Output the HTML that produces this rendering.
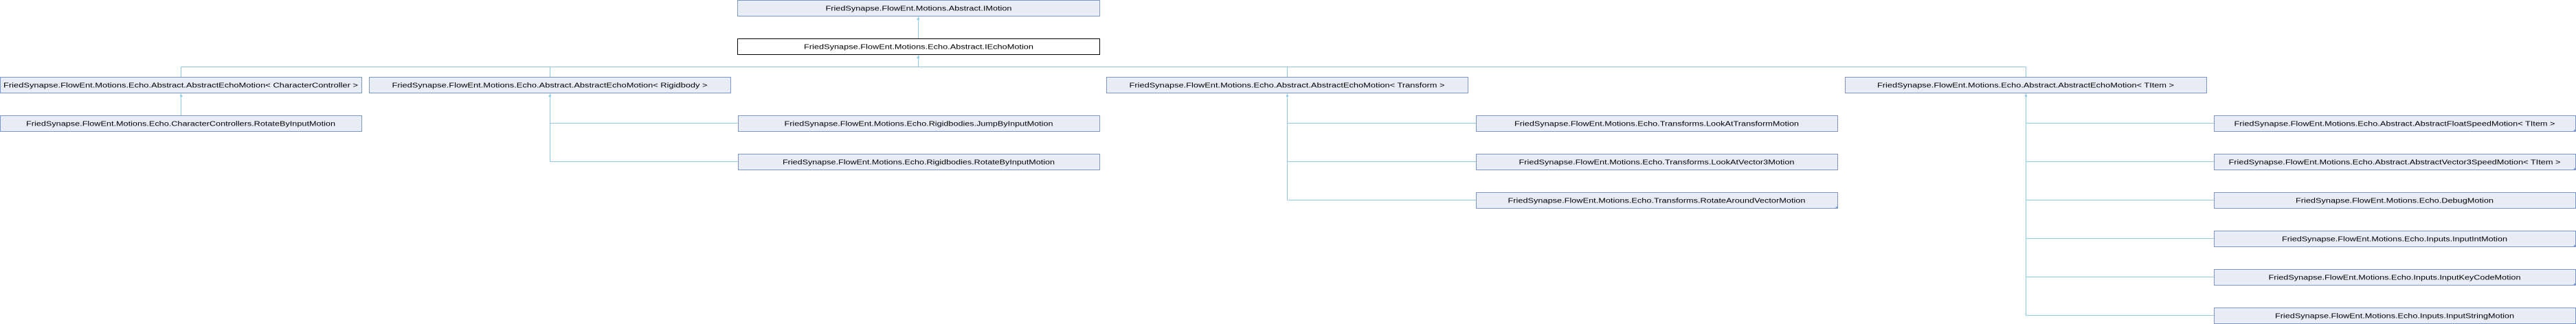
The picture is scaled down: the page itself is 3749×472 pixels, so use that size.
<!DOCTYPE html>
<html><head><meta charset="utf-8"><style>
html,body{margin:0;padding:0;background:#fff;}
svg{display:block;}
text{font-family:"Liberation Sans",sans-serif;font-size:10px;fill:#000;}
.b{fill:#e8ecf5;stroke:#7d96cc;stroke-width:1;}
.w{fill:#fff;stroke:#000;stroke-width:1;}
.l{stroke:#8ecbea;stroke-width:1;fill:none;}
.a{fill:#8ecbea;}
.c{fill:#7d96cc;}
</style></head><body>
<svg width="3749" height="472" viewBox="0 0 3749 472" xmlns="http://www.w3.org/2000/svg">
<!-- connectors -->
<path class="l" d="M1336.5 27V56.5M1336.5 84V97.5M263.5 97.5H2948.5M263.5 97.5V112.5M800.5 97.5V112.5M1873.5 97.5V112.5M2948.5 97.5V112.5"/>
<path class="l" d="M263.5 140V168.5"/>
<path class="l" d="M800.5 140V235.5M800.5 179.5H1074M800.5 235.5H1074"/>
<path class="l" d="M1873.5 140V291.5M1873.5 179.5H2148M1873.5 235.5H2148M1873.5 291.5H2148"/>
<path class="l" d="M2948.5 140V459.5M2948.5 179.5H3222M2948.5 235.5H3222M2948.5 291.5H3222M2948.5 347.5H3222M2948.5 403.5H3222M2948.5 459.5H3222"/>
<!-- arrowheads -->
<path class="a" d="M1334.5 29L1336.5 24L1338.5 29Z"/>
<path class="a" d="M1334.5 85L1336.5 80L1338.5 85Z"/>
<path class="a" d="M261.5 141L263.5 136L265.5 141Z"/>
<path class="a" d="M798.5 141L800.5 136L802.5 141Z"/>
<path class="a" d="M1871.5 141L1873.5 136L1875.5 141Z"/>
<path class="a" d="M2946.5 141L2948.5 136L2950.5 141Z"/>

<!-- row 0/1 -->
<rect class="b" x="1073.5" y="0.5" width="527" height="23"/>
<text x="1337" y="15.5" text-anchor="middle" textLength="271" lengthAdjust="spacingAndGlyphs">FriedSynapse.FlowEnt.Motions.Abstract.IMotion</text>
<rect class="w" x="1073.5" y="56.5" width="527" height="23"/>
<text x="1337" y="71.5" text-anchor="middle" textLength="334" lengthAdjust="spacingAndGlyphs">FriedSynapse.FlowEnt.Motions.Echo.Abstract.IEchoMotion</text>

<!-- row 2 -->
<rect class="b" x="0.5" y="112.5" width="526" height="23"/>
<text x="263" y="127.5" text-anchor="middle" textLength="516" lengthAdjust="spacingAndGlyphs">FriedSynapse.FlowEnt.Motions.Echo.Abstract.AbstractEchoMotion&lt; CharacterController &gt;</text>
<rect class="b" x="537.5" y="112.5" width="526" height="23"/>
<text x="800" y="127.5" text-anchor="middle" textLength="459" lengthAdjust="spacingAndGlyphs">FriedSynapse.FlowEnt.Motions.Echo.Abstract.AbstractEchoMotion&lt; Rigidbody &gt;</text>
<rect class="b" x="1610.5" y="112.5" width="526" height="23"/>
<text x="1873" y="127.5" text-anchor="middle" textLength="459" lengthAdjust="spacingAndGlyphs">FriedSynapse.FlowEnt.Motions.Echo.Abstract.AbstractEchoMotion&lt; Transform &gt;</text>
<rect class="b" x="2685.5" y="112.5" width="526" height="23"/>
<text x="2948" y="127.5" text-anchor="middle" textLength="432" lengthAdjust="spacingAndGlyphs">FriedSynapse.FlowEnt.Motions.Echo.Abstract.AbstractEchoMotion&lt; TItem &gt;</text>

<!-- col0 child -->
<rect class="b" x="0.5" y="168.5" width="526" height="23"/>
<text x="263" y="183.5" text-anchor="middle" textLength="450" lengthAdjust="spacingAndGlyphs">FriedSynapse.FlowEnt.Motions.Echo.CharacterControllers.RotateByInputMotion</text>

<!-- rigidbody children -->
<rect class="b" x="1074.5" y="168.5" width="526" height="23"/>
<text x="1337" y="183.5" text-anchor="middle" textLength="391" lengthAdjust="spacingAndGlyphs">FriedSynapse.FlowEnt.Motions.Echo.Rigidbodies.JumpByInputMotion</text>
<rect class="b" x="1074.5" y="224.5" width="526" height="23"/>
<text x="1337" y="239.5" text-anchor="middle" textLength="396" lengthAdjust="spacingAndGlyphs">FriedSynapse.FlowEnt.Motions.Echo.Rigidbodies.RotateByInputMotion</text>

<!-- transform children -->
<rect class="b" x="2148.5" y="168.5" width="526" height="23"/>
<text x="2411" y="183.5" text-anchor="middle" textLength="414" lengthAdjust="spacingAndGlyphs">FriedSynapse.FlowEnt.Motions.Echo.Transforms.LookAtTransformMotion</text>
<rect class="b" x="2148.5" y="224.5" width="526" height="23"/>
<text x="2411" y="239.5" text-anchor="middle" textLength="401" lengthAdjust="spacingAndGlyphs">FriedSynapse.FlowEnt.Motions.Echo.Transforms.LookAtVector3Motion</text>
<rect class="b" x="2148.5" y="280.5" width="526" height="23"/>
<text x="2411" y="295.5" text-anchor="middle" textLength="433" lengthAdjust="spacingAndGlyphs">FriedSynapse.FlowEnt.Motions.Echo.Transforms.RotateAroundVectorMotion</text>
<path class="c" d="M2675 299L2675 304L2670 304Z"/>

<!-- TItem children -->
<rect class="b" x="3222.5" y="168.5" width="526" height="23"/>
<text x="3485" y="183.5" text-anchor="middle" textLength="467" lengthAdjust="spacingAndGlyphs">FriedSynapse.FlowEnt.Motions.Echo.Abstract.AbstractFloatSpeedMotion&lt; TItem &gt;</text>
<path class="c" d="M3749 187L3749 192L3744 192Z"/>
<rect class="b" x="3222.5" y="224.5" width="526" height="23"/>
<text x="3485" y="239.5" text-anchor="middle" textLength="483" lengthAdjust="spacingAndGlyphs">FriedSynapse.FlowEnt.Motions.Echo.Abstract.AbstractVector3SpeedMotion&lt; TItem &gt;</text>
<path class="c" d="M3749 243L3749 248L3744 248Z"/>
<rect class="b" x="3222.5" y="280.5" width="526" height="23"/>
<text x="3485" y="295.5" text-anchor="middle" textLength="288" lengthAdjust="spacingAndGlyphs">FriedSynapse.FlowEnt.Motions.Echo.DebugMotion</text>
<rect class="b" x="3222.5" y="336.5" width="526" height="23"/>
<text x="3485" y="351.5" text-anchor="middle" textLength="328" lengthAdjust="spacingAndGlyphs">FriedSynapse.FlowEnt.Motions.Echo.Inputs.InputIntMotion</text>
<path class="c" d="M3749 355L3749 360L3744 360Z"/>
<rect class="b" x="3222.5" y="392.5" width="526" height="23"/>
<text x="3485" y="407.5" text-anchor="middle" textLength="367" lengthAdjust="spacingAndGlyphs">FriedSynapse.FlowEnt.Motions.Echo.Inputs.InputKeyCodeMotion</text>
<path class="c" d="M3749 411L3749 416L3744 416Z"/>
<rect class="b" x="3222.5" y="448.5" width="526" height="23"/>
<text x="3485" y="463.5" text-anchor="middle" textLength="348" lengthAdjust="spacingAndGlyphs">FriedSynapse.FlowEnt.Motions.Echo.Inputs.InputStringMotion</text>
</svg>
</body></html>
